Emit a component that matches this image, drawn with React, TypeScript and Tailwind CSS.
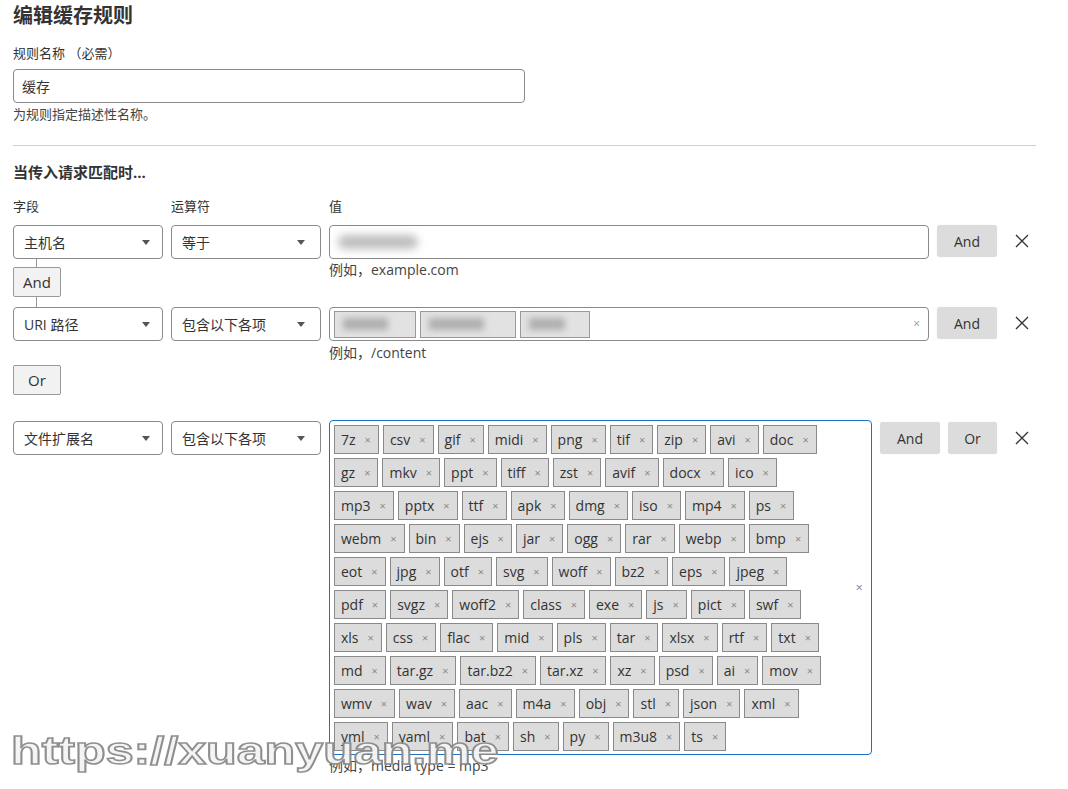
import React from "react";

const tagRows: string[][] = [
  ["7z", "csv", "gif", "midi", "png", "tif", "zip", "avi", "doc"],
  ["gz", "mkv", "ppt", "tiff", "zst", "avif", "docx", "ico"],
  ["mp3", "pptx", "ttf", "apk", "dmg", "iso", "mp4", "ps"],
  ["webm", "bin", "ejs", "jar", "ogg", "rar", "webp", "bmp"],
  ["eot", "jpg", "otf", "svg", "woff", "bz2", "eps", "jpeg"],
  ["pdf", "svgz", "woff2", "class", "exe", "js", "pict", "swf"],
  ["xls", "css", "flac", "mid", "pls", "tar", "xlsx", "rtf", "txt"],
  ["md", "tar.gz", "tar.bz2", "tar.xz", "xz", "psd", "ai", "mov"],
  ["wmv", "wav", "aac", "m4a", "obj", "stl", "json", "xml"],
  ["yml", "yaml", "bat", "sh", "py", "m3u8", "ts"],
];

function Select({ label, w = "w-[150px]", pr = "pr-[12px]" }: { label: string; w?: string; pr?: string }) {
  return (
    <div
      className={`${w} h-[34px] shrink-0 border border-[#8a8a8a] rounded-[4px] bg-white pl-[10px] ${pr} flex items-center justify-between text-[14px] text-[#333]`}
    >
      <span>{label}</span>
      <span className="w-0 h-0 border-l-[4px] border-r-[4px] border-t-[5px] border-l-transparent border-r-transparent border-t-[#555]" />
    </div>
  );
}

function XIcon() {
  return (
    <svg width="14" height="14" viewBox="0 0 14 14" className="shrink-0">
      <path d="M1 1 L13 13 M13 1 L1 13" stroke="#333" strokeWidth="1.3" fill="none" />
    </svg>
  );
}

function Tag({ t }: { t: string }) {
  return (
    <div className="inline-flex items-center h-[29px] shrink-0 border border-[#8a8a8a] bg-[#dcdcdc] pl-[6px] pr-[7px] text-[14px] text-[#333] leading-none">
      <span>{t}</span>
      <span className="ml-[9px] text-[11px] text-[#8a8a8a]">×</span>
    </div>
  );
}

function GrayButton({ label, w }: { label: string; w: string }) {
  return (
    <div
      className={`${w} h-[32px] shrink-0 rounded-[3px] bg-[#dcdcdc] shadow-[0_0_1px_rgba(0,0,0,0.15)] flex items-center justify-center text-[14px] text-[#333]`}
    >
      {label}
    </div>
  );
}

function BlurTag({ w }: { w: string }) {
  return (
    <div className={`${w} h-[27px] shrink-0 border border-[#9a9a9a] bg-[#e2e2e2] flex items-center px-[8px]`}>
      <div className="h-[12px] w-[70%] bg-[#b0b0b0] blur-[3px]" />
    </div>
  );
}

export default function App() {
  return (
    <div className="relative w-[1068px] min-h-[789px] bg-white overflow-hidden font-['Open_Sans','Noto_Sans_CJK_SC',sans-serif] text-[#333]">
      <div className="pl-[13px] pt-[2px]">
        <div className="text-[20px] leading-[28px] font-bold text-[#333]">编辑缓存规则</div>

        <div className="mt-[14px] text-[13px] leading-[18px]">规则名称 （必需）</div>
        <div className="mt-[7px] w-[512px] h-[34px] border border-[#8a8a8a] rounded-[4px] flex items-center pl-[8px] text-[14px]">
          缓存
        </div>
        <div className="mt-[2px] text-[13px] leading-[18px] text-[#444]">为规则指定描述性名称。</div>

        <div className="mt-[22px] w-[1023px] h-px bg-[#cfcfcf]" />

        <div className="mt-[15px] text-[15px] leading-[22px] font-bold">当传入请求匹配时...</div>

        <div className="mt-[14px] flex text-[13px] leading-[18px]">
          <div className="w-[158px]">字段</div>
          <div className="w-[158px]">运算符</div>
          <div>值</div>
        </div>

        {/* Row 1 */}
        <div className="mt-[10px] flex items-start">
          <div className="w-[150px] flex flex-col">
            <Select label="主机名" />
            <div className="ml-[23px] w-px h-[8px] bg-[#999]" />
            <div className="w-[48px] h-[30px] border border-[#999] rounded-[2px] bg-[#f2f2f2] flex items-center justify-center text-[15px]">
              And
            </div>
            <div className="ml-[23px] w-px h-[10px] bg-[#999]" />
          </div>
          <div className="ml-[8px]">
            <Select label="等于" pr="pr-[15px]" />
          </div>
          <div className="ml-[8px] flex flex-col">
            <div className="w-[600px] h-[34px] border border-[#8a8a8a] rounded-[4px] flex items-center pl-[8px]">
              <div className="w-[80px] h-[14px] bg-[#bdbdbd] blur-[4px] rounded-full" />
            </div>
            <div className="mt-[1px] text-[14px] leading-[19px] text-[#444]">例如，example.com</div>
          </div>
          <div className="ml-[8px] flex items-center">
            <GrayButton label="And" w="w-[60px]" />
            <div className="ml-[18px]">
              <XIcon />
            </div>
          </div>
        </div>

        {/* Row 2 */}
        <div className="flex items-start">
          <div className="w-[150px]">
            <Select label="URI 路径" />
          </div>
          <div className="ml-[8px]">
            <Select label="包含以下各项" pr="pr-[15px]" />
          </div>
          <div className="ml-[8px] flex flex-col">
            <div className="w-[600px] h-[34px] border border-[#8a8a8a] rounded-[4px] flex items-center pl-[4px] pr-[8px]">
              <div className="flex gap-[4px]">
                <BlurTag w="w-[82px]" />
                <BlurTag w="w-[96px]" />
                <BlurTag w="w-[70px]" />
              </div>
              <div className="flex-1" />
              <span className="text-[12px] text-[#999]">×</span>
            </div>
            <div className="mt-[2px] text-[14px] leading-[19px] text-[#444]">例如，/content</div>
          </div>
          <div className="ml-[8px] flex items-center">
            <GrayButton label="And" w="w-[60px]" />
            <div className="ml-[18px]">
              <XIcon />
            </div>
          </div>
        </div>

        <div className="mt-[3px] w-[48px] h-[30px] border border-[#999] rounded-[2px] bg-[#f2f2f2] flex items-center justify-center text-[15px]">
          Or
        </div>

        {/* Row 3 */}
        <div className="mt-[25px] flex items-start">
          <div className="w-[150px] mt-[1px]">
            <Select label="文件扩展名" />
          </div>
          <div className="ml-[8px] mt-[1px]">
            <Select label="包含以下各项" pr="pr-[15px]" />
          </div>
          <div className="ml-[8px] flex flex-col">
            <div className="w-[543px] border border-[#1a73c8] rounded-[4px] pl-[4px] pr-[8px] pt-[4px] pb-[3px] flex items-center">
              <div className="flex-1 flex flex-col gap-[4px]">
                {tagRows.map((row, i) => (
                  <div key={i} className="flex gap-[4px]">
                    {row.map((t) => (
                      <Tag key={t} t={t} />
                    ))}
                  </div>
                ))}
              </div>
              <span className="text-[13px] text-[#888]">×</span>
            </div>
            <div className="mt-[1px] text-[14px] leading-[19px] text-[#444]">例如，media type = mp3</div>
          </div>
          <div className="ml-[8px] mt-[2px] flex items-center">
            <GrayButton label="And" w="w-[60px]" />
            <div className="ml-[8px]">
              <GrayButton label="Or" w="w-[49px]" />
            </div>
            <div className="ml-[18px]">
              <XIcon />
            </div>
          </div>
        </div>
      </div>

      {/* watermark */}
      <div className="absolute left-[11px] top-[727px] origin-left scale-x-[1.32] text-[38px] leading-[48px] font-bold font-['Liberation_Sans',sans-serif] text-[#f4f4f4] [-webkit-text-stroke:1.6px_#8a8a8a] opacity-95 pointer-events-none whitespace-nowrap">
        https://xuanyuan.me
      </div>
    </div>
  );
}
